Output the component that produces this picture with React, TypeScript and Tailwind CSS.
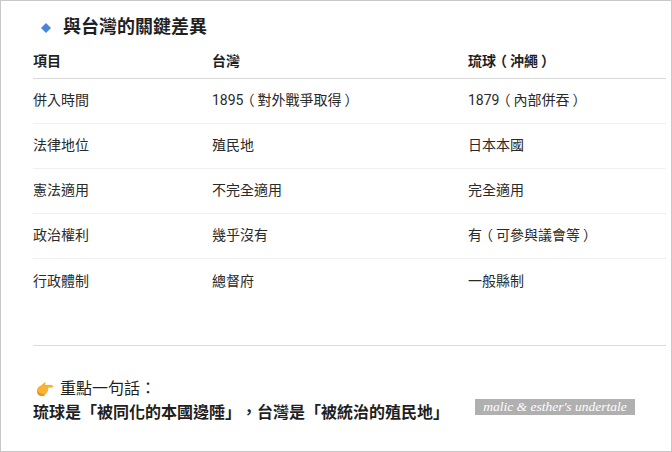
import React from "react";

const rows = [
  ["併入時間", "1895（對外戰爭取得）", "1879（內部併吞）"],
  ["法律地位", "殖民地", "日本本國"],
  ["憲法適用", "不完全適用", "完全適用"],
  ["政治權利", "幾乎沒有", "有（可參與議會等）"],
  ["行政體制", "總督府", "一般縣制"],
];

const font = { fontFamily: 'Roboto, "Noto Sans CJK TC", sans-serif' };

function Cell({ text }: { text: string }) {
  const parts = text.split(/([（）])/);
  return (
    <div className="[text-spacing-trim:space-all]">
      {parts.map((p, i) =>
        p === "（" || p === "）" ? (
          <span key={i} className="inline-block w-[1em] text-center [font-feature-settings:'palt']">{p}</span>
        ) : (
          <React.Fragment key={i}>{p}</React.Fragment>
        )
      )}
    </div>
  );
}

function Hand() {
  return (
    <svg width="18" height="16" viewBox="0 0 18 16" className="shrink-0 ml-[3px]">
      <path d="M1 9.5C1 6.5 3 5.5 5 4.5L8.5 1.5C9.5 1 10 2 9.5 3L9 4.5L16 4.4C17.6 4.5 17.6 6.4 16 6.5L12 6.8C12.6 8 12.4 9 11.8 9.6C11.9 10.6 11.4 11.2 10.7 11.4C10.6 12.4 10 13 9 13.2C8.6 14.6 7.6 15 6 15C2.5 15 1 12.5 1 9.5Z" fill="#f9b233" />
      <path d="M1 9.5C1 12.5 2.5 15 6 15C7.6 15 8.6 14.6 9 13.2C6 13.2 3 12 1 9.5Z" fill="#ee8f2a" />
      <path d="M9 4.5L16 4.4" stroke="#e8902c" strokeWidth="0.7" fill="none" />
    </svg>
  );
}

export default function App() {
  return (
    <div lang="zh-TW" style={font} className="relative w-[672px] h-[452px] bg-white border border-[#c8c8c8] pl-8 pr-[5px] pt-[14px] text-[#2a2a2a] overflow-hidden">
      <h2 className="flex items-center h-6 text-[18px] font-bold leading-6 text-[#1f1f1f]">
        <svg width="10" height="10" viewBox="0 0 10 10" className="ml-2 mr-3 mt-px">
          <path d="M5 0L10 5L5 10L0 5Z" fill="#4a86d8" />
        </svg>
        與台灣的關鍵差異
      </h2>
      <div className="mt-1 pt-px grid grid-cols-[179px_256px_1fr] h-9 items-center border-b border-[#d9d9d9] text-[14px] font-bold text-[#1f1f1f]">
        <div>項目</div>
        <div>台灣</div>
        <Cell text="琉球（沖繩）" />
      </div>
      {rows.map((r, i) => (
        <div key={i} className={`grid grid-cols-[179px_256px_1fr] h-[45px] pb-px items-center text-[14px] ${i < 4 ? "border-b border-[#f0f0f0]" : ""}`}>
          <div>{r[0]}</div>
          <Cell text={r[1]} />
          <Cell text={r[2]} />
        </div>
      ))}
      <div className="mt-[41px] border-t border-[#dcdcdc]" />
      <p className="mt-[31px] flex items-center gap-[6px] h-6 text-[16px] leading-6 text-[#1f1f1f]">
        <Hand />
        重點一句話：
      </p>
      <p className="text-[16px] leading-6 font-bold text-[#1f1f1f] [text-spacing-trim:space-all]">琉球是「被同化的本國邊陲」，台灣是「被統治的殖民地」</p>
      <div className="absolute left-[474px] top-[398px] w-40 h-4 bg-[#b0b0b0] text-white text-[13.5px] leading-4 text-center italic" style={{ fontFamily: '"Liberation Serif", cursive' }}>
        malic &amp; esther's undertale
      </div>
    </div>
  );
}
